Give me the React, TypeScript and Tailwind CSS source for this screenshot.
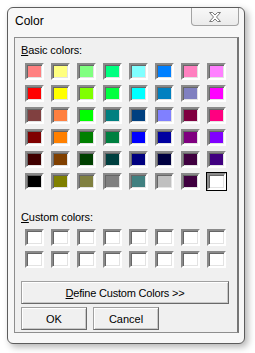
const basic = [
  ["#ff8080", "#ffff80", "#80ff80", "#00ff80", "#80ffff", "#0080ff", "#ff80c0", "#ff80ff"],
  ["#ff0000", "#ffff00", "#80ff00", "#00ff40", "#00ffff", "#0080c0", "#8080c0", "#ff00ff"],
  ["#804040", "#ff8040", "#00ff00", "#008080", "#004080", "#8080ff", "#800040", "#ff0080"],
  ["#800000", "#ff8000", "#008000", "#008040", "#0000ff", "#0000a0", "#800080", "#8000ff"],
  ["#400000", "#804000", "#004000", "#004040", "#000080", "#000040", "#400040", "#400080"],
  ["#000000", "#808000", "#808040", "#808080", "#408080", "#c0c0c0", "#400040", "#ffffff"],
];

function Swatch({ color, selected }: { color: string; selected?: boolean }) {
  return (
    <div
      className={
        "w-[19px] h-[17px] border-2 border-t-[#8a8a8a] border-l-[#8a8a8a] border-b-white border-r-white shadow-[inset_1px_1px_0_#666666,inset_-1px_-1px_0_#e3e3e3]" +
        (selected ? " outline outline-1 outline-black" : "")
      }
      style={{ backgroundColor: color }}
    />
  );
}

function Button({ children, className }: { children: React.ReactNode; className: string }) {
  return (
    <button
      type="button"
      className={
        "h-[23px] flex items-center justify-center bg-[#f0f0f0] border border-[#a0a0a0] border-r-[#696969] border-b-[#696969] shadow-[inset_1px_1px_0_#ffffff,inset_-1px_-1px_0_#c8c8c8] text-[11px] leading-[14px] text-black " +
        className
      }
    >
      {children}
    </button>
  );
}

export default function App() {
  return (
    <div className="w-[255px] h-[353px] bg-white pt-[7px] pl-[7px] font-['Liberation_Sans',Arial,sans-serif] text-black">
      {/* Window frame */}
      <div className="w-[238px] h-[337px] rounded-[6px] border border-[#5c5c5c] bg-[#f7f7f7] shadow-[3px_3px_7px_rgba(0,0,0,0.3)] flex flex-col">
        {/* Title bar */}
        <div className="h-[29px] flex items-start justify-between">
          <span className="ml-[7px] mt-[6px] text-[12px] leading-[15px]">Color</span>
          <div className="w-[48px] h-[18px] mr-[5px] border border-t-0 border-[#a3a3a3] rounded-b-[4px] bg-gradient-to-b from-[#f8f8f8] to-[#ebebeb] flex items-center justify-center">
            <svg width="12" height="10" viewBox="0 0 12 10">
              <polygon
                points="0.5,0.5 3.5,0.5 6,3 8.5,0.5 11.5,0.5 7.5,5 11.5,9.5 8.5,9.5 6,7 3.5,9.5 0.5,9.5 4.5,5"
                fill="#ffffff"
                stroke="#7a7a7a"
                strokeWidth="1"
                strokeLinejoin="round"
              />
            </svg>
          </div>
        </div>

        {/* Client area */}
        <div className="ml-[6px] w-[225px] h-[296px] border border-[#8e8e8e] border-r-2 border-r-[#767676] bg-[#f0f0f0] pt-[5px] flex flex-col">
          <p className="ml-[6px] text-[11px] leading-[14px] tracking-[-0.1px]">
            <span className="underline">B</span>asic colors:
          </p>
          <div className="ml-[10px] mt-[6px] grid grid-cols-[repeat(8,19px)] gap-x-[7px] gap-y-[5px]">
            {basic.flatMap((row, r) =>
              row.map((c, i) => <Swatch key={`${r}-${i}`} color={c} selected={r === 5 && i === 7} />)
            )}
          </div>

          <p className="ml-[6px] mt-[20px] text-[11px] leading-[14px] tracking-[-0.1px]">
            <span className="underline">C</span>ustom colors:
          </p>
          <div className="ml-[10px] mt-[5px] grid grid-cols-[repeat(8,19px)] gap-x-[7px] gap-y-[5px]">
            {Array.from({ length: 16 }).map((_, i) => (
              <Swatch key={i} color="#ffffff" />
            ))}
          </div>

          <Button className="ml-[6px] mt-[13px] w-[208px] tracking-[-0.2px]">
            <span className="underline">D</span>efine Custom Colors &gt;&gt;
          </Button>
          <div className="ml-[6px] mt-[3px] flex gap-[6px]">
            <Button className="w-[66px]">OK</Button>
            <Button className="w-[66px]">Cancel</Button>
          </div>
        </div>
      </div>
    </div>
  );
}
